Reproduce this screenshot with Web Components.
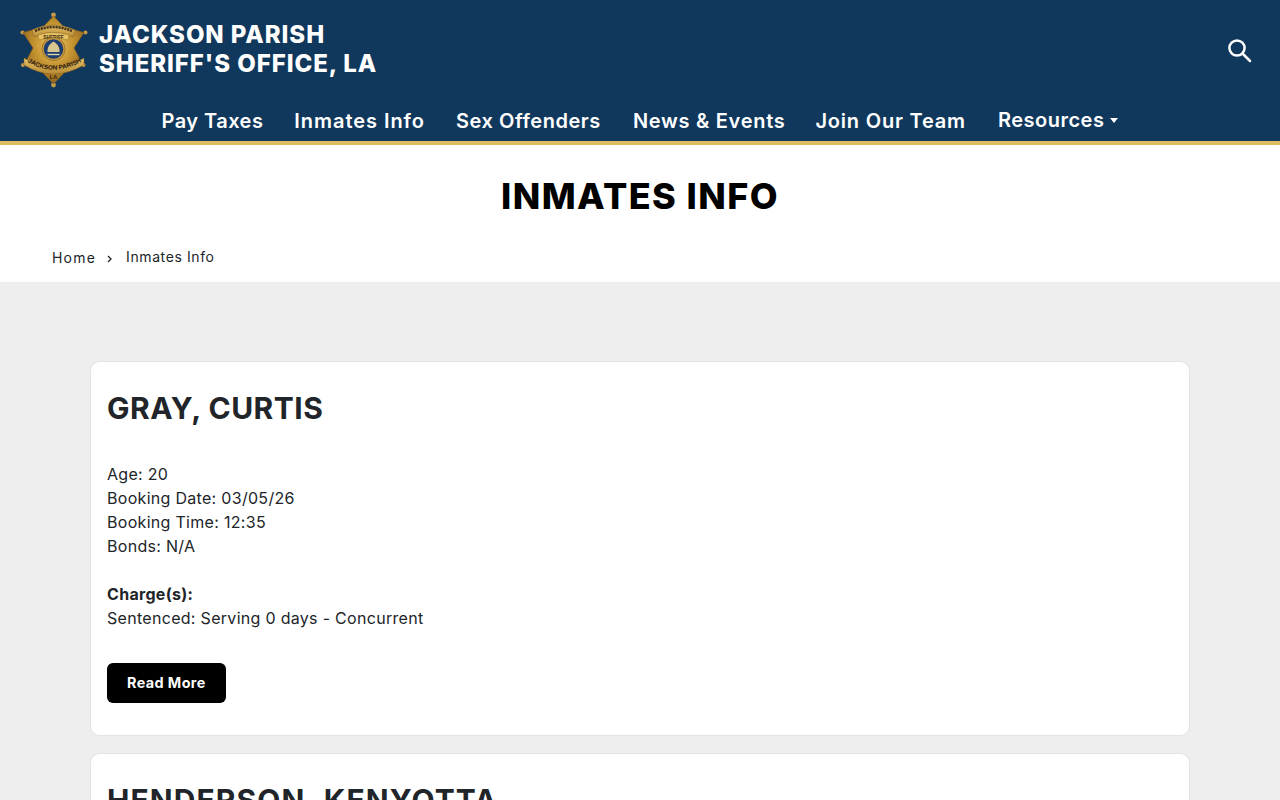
<!DOCTYPE html>
<html lang="en"><head><meta charset="utf-8"><title>Inmates Info</title>
<style>
html,body{margin:0;padding:0;height:800px;overflow:hidden;background:#eee;font-family:Inter,"Liberation Sans",sans-serif}
</style></head><body>
<site-header></site-header>
<page-title heading="INMATES INFO"></page-title>
<main-list>
<inmate-card name="GRAY, CURTIS" age="20" date="03/05/26" time="12:35" bonds="N/A" charges="Sentenced: Serving 0 days - Concurrent" style="--h-ls:.5px"></inmate-card>
<inmate-card name="HENDERSON, KENYOTTA" style="--h-ls:1.08px"></inmate-card>
</main-list>
<script>
function def(name,html,cls){
  const t=document.createElement('template');t.innerHTML=html;
  customElements.define(name,class extends HTMLElement{
    constructor(){super();this.attachShadow({mode:'open'}).appendChild(t.content.cloneNode(true));}
    connectedCallback(){if(cls)cls(this,this.shadowRoot);}
  });
}
def('sheriff-badge',`<style>:host{display:block;width:68px;height:76px}svg{display:block}</style>
<svg width="68" height="76" viewBox="0 0 68 76">
<defs>
<radialGradient id="g" cx="50%" cy="42%" r="60%"><stop offset="0" stop-color="#eec65f"/><stop offset=".55" stop-color="#c2912f"/><stop offset="1" stop-color="#8a5f1e"/></radialGradient>
<linearGradient id="b" x1="0" y1="0" x2="0" y2="1"><stop offset="0" stop-color="#e6c46a"/><stop offset="1" stop-color="#b88a34"/></linearGradient>
<path id="arc" d="M7 49.500Q33 66 62 49.500"/>
</defs>
<g fill="#c39a48"><circle cx="33.500" cy="3" r="2.400"/><circle cx="65.500" cy="20.500" r="2"/><circle cx="63.500" cy="53" r="2"/><circle cx="33.500" cy="73" r="2.400"/><circle cx="3" cy="53" r="2"/><circle cx="2.500" cy="20.500" r="2"/></g>
<path d="M33.500 4L44 15L64 20.500L54 36L63 53L45 60L33.500 72L22 60L4 53L13 36L3 20.500L23 15Z" fill="url(#g)" stroke="#7f591e" stroke-width=".6"/>
<path d="M12 18Q33 8 55 18L53 25Q33 16 14 25Z" fill="url(#b)" stroke="#7e5a20" stroke-width=".5"/>
<path d="M15 19Q33 11 52 19" fill="none" stroke="#4a3418" stroke-width="2.600" stroke-dasharray="2.300 .7"/>
<path d="M18 23Q33 18 49 23L48 28Q33 24 19 28Z" fill="#e6c364" stroke="#8a6122" stroke-width=".4"/>
<text x="33.500" y="26.500" font-size="4.800" font-weight="700" text-anchor="middle" fill="#3a2812" font-family="Liberation Sans">SHERIFF</text>
<circle cx="33.500" cy="37" r="11.500" fill="#c99a3f" stroke="#7e5a20" stroke-width=".6"/>
<circle cx="33.500" cy="37" r="9.800" fill="#1d3d70"/>
<path d="M27.500 40C27 34 31 31 33.500 29.500C36 31 40 34 39.500 40Z" fill="#d8c88f"/>
<path d="M27.500 42.500H39.500" stroke="#e2d7a8" stroke-width="1.400"/>
<path d="M4 46Q33 65 64 46L64 53Q33 71 4 53Z" fill="url(#b)" stroke="#7e5a20" stroke-width=".5"/>
<text font-size="6.400" font-weight="700" fill="#2f2010" font-family="Liberation Sans"><textPath href="#arc" startOffset="50%" text-anchor="middle">JACKSON PARISH</textPath></text>
<text x="33.500" y="67" font-size="5.500" font-weight="700" text-anchor="middle" fill="#2f2010" font-family="Liberation Sans">LA</text>
</svg>`);
def('nav-link',`<style>:host{display:inline-flex;align-items:center;font-size:20px;font-weight:600;color:#fff;letter-spacing:var(--ls,.5px);white-space:nowrap}</style><slot></slot>`);
def('site-header',`<style>
:host{display:block;background:#10375c;border-bottom:4px solid #dfbd60;height:141px;color:#fff}
.top{display:flex;align-items:center;justify-content:space-between;padding:12px 27px 0 20px;height:76px}
.brand{display:flex;align-items:center;gap:11px}
.name{font-size:24px;line-height:29px;font-weight:800;letter-spacing:.93px;margin-top:-3px;white-space:nowrap}
.nav{display:flex;justify-content:center;align-items:flex-start;gap:32px;padding:21px 0 0 0;line-height:24px}
.m1{margin-left:-1px}
.m2{margin-left:-2px}
svg.s{display:block;margin-top:2px}
.car{display:inline-block;width:0;height:0;border:4px solid transparent;border-top:5px solid #fff;border-bottom:0;margin-left:6px;margin-top:1px}
</style>
<div class="top"><div class="brand"><sheriff-badge></sheriff-badge><div class="name">JACKSON PARISH<br>SHERIFF'S OFFICE, LA</div></div>
<svg class="s" width="26" height="26" viewBox="0 0 26 26" fill="none" stroke="#fff" stroke-width="2.500"><circle cx="10" cy="10" r="7.600"/><path d="M15.500 15.500L23 23" stroke-linecap="round"/></svg></div>
<div class="nav"><nav-link style="--ls:.45px">Pay Taxes</nav-link><nav-link class="m1" style="--ls:.95px">Inmates Info</nav-link><nav-link class="m1" style="--ls:.55px">Sex Offenders</nav-link><nav-link style="--ls:.72px">News &amp; Events</nav-link><nav-link class="m2" style="--ls:.8px">Join Our Team</nav-link><nav-link style="margin-top:-1px">Resources<span class="car"></span></nav-link></div>`);
def('page-title',`<style>
:host{display:block;background:#fff;height:137px;box-sizing:border-box;color:#000}
h1{margin:0;text-align:center;font-size:36px;line-height:44px;font-weight:800;letter-spacing:1.43px;padding-top:29px}
.bc{display:flex;align-items:flex-start;padding:30px 0 0 52px;font-size:14px;line-height:20px;color:#212529}
.h{letter-spacing:1.2px}
.i{letter-spacing:.6px;margin-top:-1px}
.sep{width:30px;margin-top:7px}
</style><h1></h1><div class="bc"><span class="h">Home</span><svg class="sep" width="30" height="8" viewBox="0 0 30 8" fill="none" stroke="#212529" stroke-width="1.300"><path d="M12 1L15 4L12 7"/></svg><span class="i">Inmates Info</span></div>`,(e,s)=>{s.querySelector('h1').textContent=e.getAttribute('heading')});
def('main-list',`<style>:host{display:flex;flex-direction:column;gap:17px;padding:79px 90px 0 90px;}</style><slot></slot>`);
def('inmate-card',`<style>
:host{display:block;background:#fff;border:1px solid #e3e3e3;border-radius:10px;padding:16px;color:#212529;font-size:16px;line-height:24px;letter-spacing:.3px}
h2{margin:12px 0 36px;font-size:30px;line-height:36px;font-weight:700;letter-spacing:var(--h-ls,.5px);white-space:nowrap}
p{margin:0 0 24px}
.btn{display:inline-block;background:#000;color:#fff;border-radius:6px;padding:0 20px;height:40px;line-height:40px;font-size:14.400px;font-weight:700;letter-spacing:.4px}
.act{padding-top:9px;padding-bottom:16px}
b{font-weight:700}
</style><h2></h2><div class="body"><p>Age: <span id="a"></span><br>Booking Date: <span id="d"></span><br>Booking Time: <span id="t"></span><br>Bonds: <span id="o"></span></p><p><b>Charge(s):</b><br><span id="c"></span></p><div class="act"><span class="btn">Read More</span></div></div>`,(e,s)=>{
 s.querySelector('h2').textContent=e.getAttribute('name');
 for(const [i,k] of [['a','age'],['d','date'],['t','time'],['o','bonds'],['c','charges']]) s.getElementById(i).textContent=e.getAttribute(k)||'';
});
</script>
</body></html>
